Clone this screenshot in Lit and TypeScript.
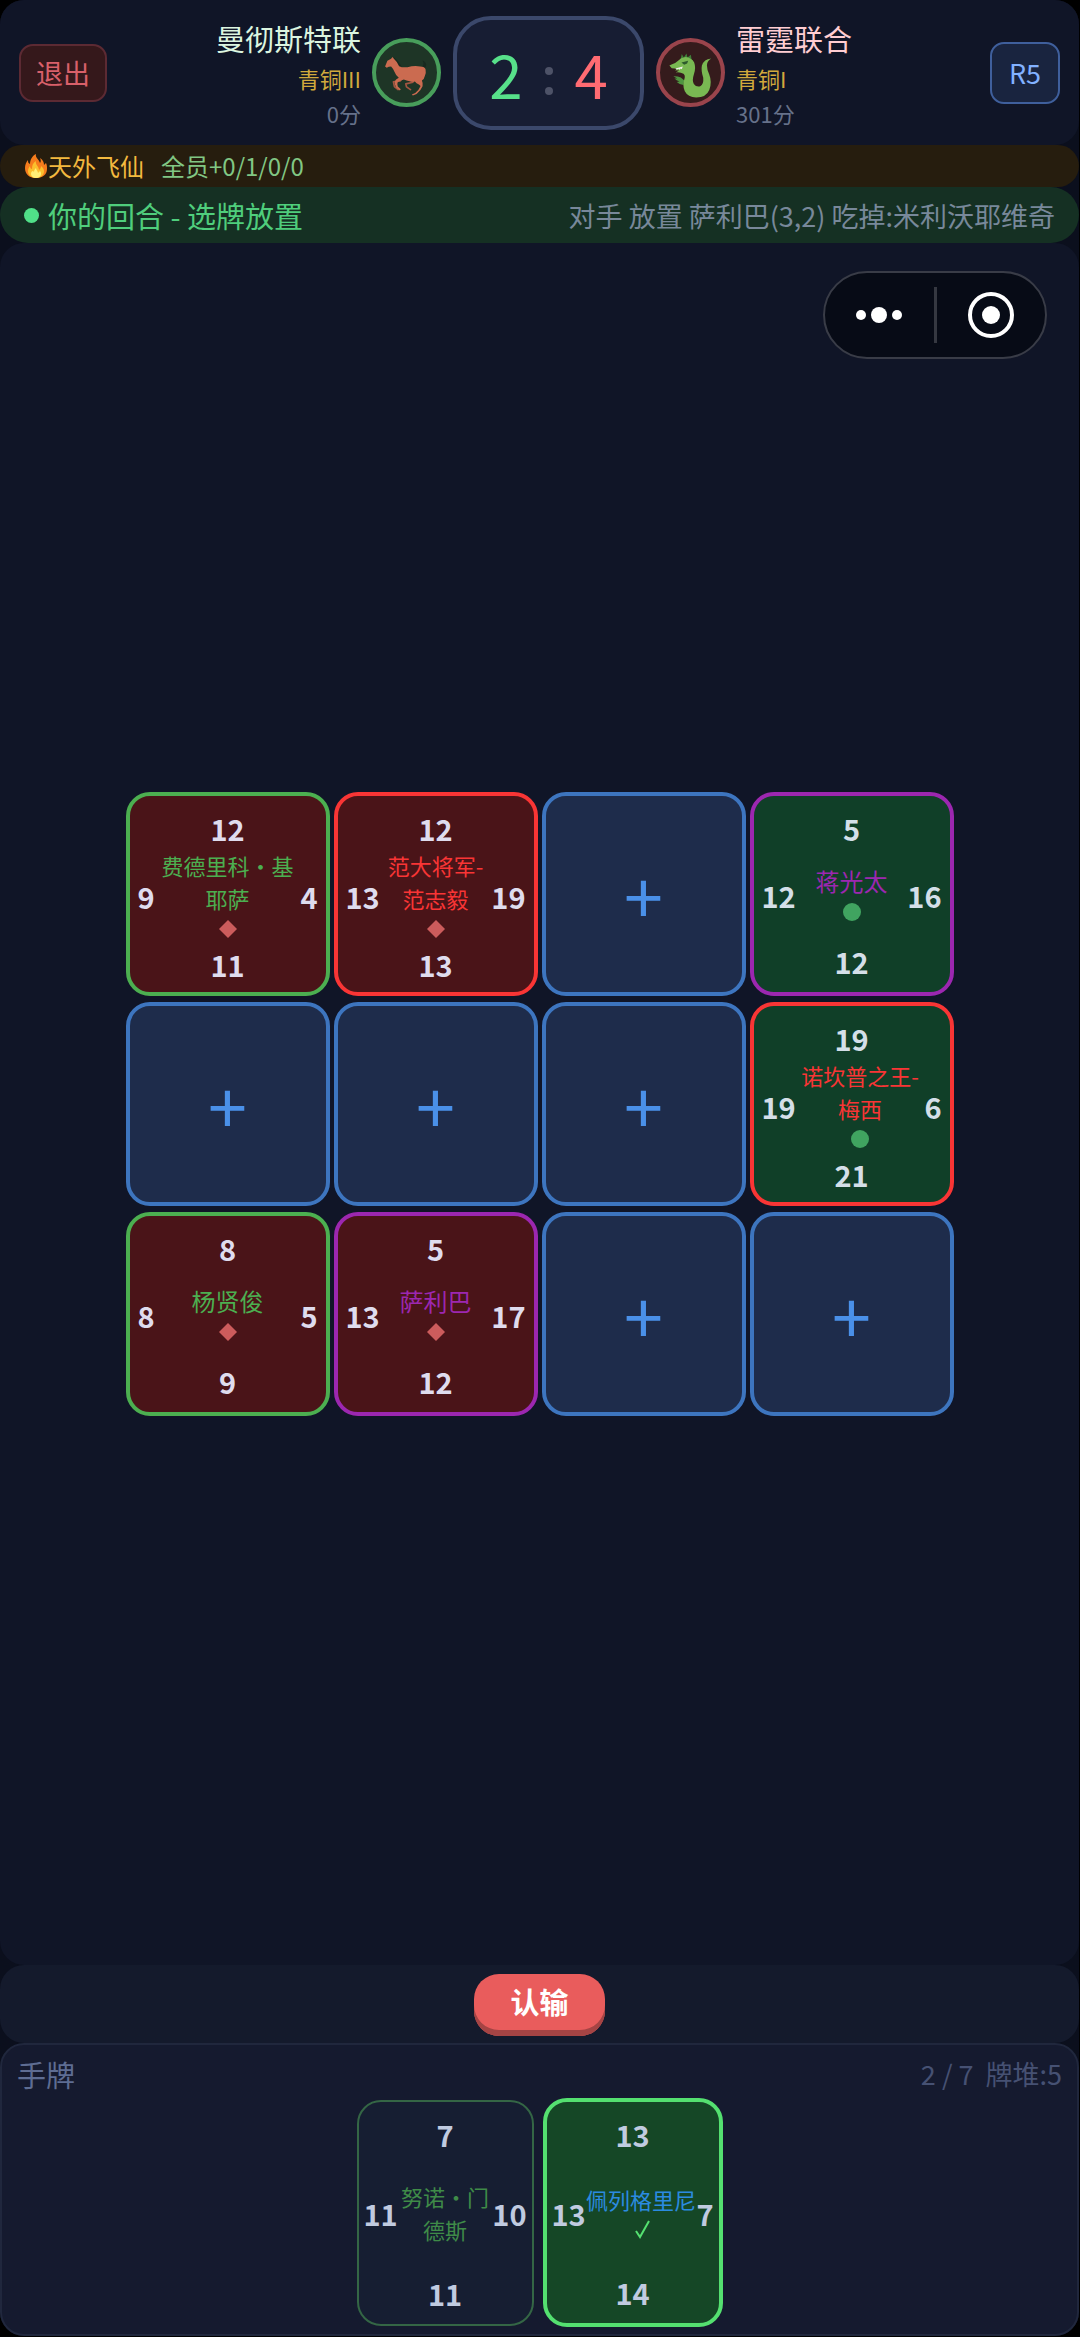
import { LitElement, html, css, svg, nothing } from 'lit';
import { customElement, property } from 'lit/decorators.js';
import { classMap } from 'lit/directives/class-map.js';

type Rarity = 'green' | 'red' | 'purple' | 'blue';

interface Card {
  name: string;
  rarity: Rarity;
  // top, right, bottom, left
  stats: [number, number, number, number];
  owner?: 'mine' | 'enemy';
}

const BOARD: (Card | null)[] = [
  { name: '费德里科·基耶萨', rarity: 'green', stats: [12, 4, 11, 9], owner: 'enemy' },
  { name: '范大将军-范志毅', rarity: 'red', stats: [12, 19, 13, 13], owner: 'enemy' },
  null,
  { name: '蒋光太', rarity: 'purple', stats: [5, 16, 12, 12], owner: 'mine' },
  null,
  null,
  null,
  { name: '诺坎普之王-梅西', rarity: 'red', stats: [19, 6, 21, 19], owner: 'mine' },
  { name: '杨贤俊', rarity: 'green', stats: [8, 5, 9, 8], owner: 'enemy' },
  { name: '萨利巴', rarity: 'purple', stats: [5, 17, 12, 13], owner: 'enemy' },
  null,
  null,
];

const HAND: Card[] = [
  { name: '努诺·门德斯', rarity: 'green', stats: [7, 10, 11, 11] },
  { name: '佩列格里尼', rarity: 'blue', stats: [13, 7, 14, 13] },
];

const horse = svg`
  <svg class="beast" viewBox="20 18 206 206" aria-hidden="true">
    <path fill="#17291f" d="M164 104q6 1 9-5 2-7-2-14 10 4 11 13-1 9-7 13zM78 84l8-8q12 8 22 26l-6 2z"/>
    <g fill="none" stroke="#a35642" stroke-width="5" stroke-linecap="round" stroke-linejoin="round">
      <path d="M112 136l-8 10-20 3 3 14 11 9"/>
      <path d="M148 138l-6 12-21 5 2 9 12 8"/>
    </g>
    <path fill="#cb6b50" d="M59 103l7-17 11-6 4-5 5 6q9 8 15 21 10 5 25 3 20-5 38-2 14 0 16 9 2 9-2 19-2 10-9 14 4 9 2 17-5 13-18 23l-11 5-3-3 10-5q12-10 16-21l-5-4q-8-3-12-9-8 2-16-1-9-1-17-5-8 3-18 7-3 6 0 14l9 8-3 4-11-9q-6-10-4-18 2-6 12-11-9-7-13-18-3-9-10-16l-7 1-6 3z"/>
  </svg>
`;

const dragon = svg`
  <svg class="beast" viewBox="890 53 206 206" aria-hidden="true">
    <path fill="#3f7d38" d="M963 118l4-17 6 10 8-12 3 12 10-8 2 13 6 8z"/>
    <path fill="#4f9440" d="M942 167q11-1 22 4l10 8-2 14q-12-1-20-9l8-1q-9-3-15-9h8z"/>
    <path fill="#79b852" d="M930 135l8-4q10-2 17-9 9-10 23-12 18 2 26 16 6 16-1 36-6 18 0 28 7 10 19 7 11-5 9-25-7-22-4-37 6-19 28-21-12 6-13 20 0 12 7 28 9 23 0 46-9 22-39 23-25-1-34-19-8-17-1-37 3-10-3-15-10-6-23-4l10-6-13-1 9-4-18-2z"/>
    <path fill="#2d5a2c" d="M966 126l20-5-3 8-9 4z"/>
    <path fill="#f2f2ec" d="M948 144l22-6-3 8-3-2-4 4-3-3-5 3z"/>
  </svg>
`;

const sharedStyles = css`
  :host {
    box-sizing: border-box;
    font-family: 'Noto Sans CJK SC', 'Noto Sans', sans-serif;
  }

  *,
  *::before {
    box-sizing: border-box;
  }

  button {
    margin: 0;
    padding: 0;
    border: 0;
    background: none;
    font: inherit;
    cursor: pointer;
  }
`;


@customElement('player-card')
export class PlayerCard extends LitElement {
  static override styles = [sharedStyles, css`
    :host {
      display: block;
    }

    .card {
      display: flex;
      flex-direction: column;
      width: 100%;
      height: 100%;
      padding: 11px 8px 10px;
      border: 4px solid currentColor;
      border-radius: 24px;
      font-size: 22px;
      line-height: 33px;
    }

    .green { color: #4caf50; }
    .red { color: #f93535; }
    .purple { color: #9c27b0; }
    .blue { color: #2b8be0; }

    .enemy { background: #4a1418; }
    .mine { background: #103f28; }

    .hand {
      padding: 11px 5px 10px;
      border: 2px solid #346645;
      background: #161e32;
    }

    .hand.green { color: #3f8b48; }

    .hand.selected {
      border: 4px solid #54e070;
      background: #154726;
    }

    .stat {
      flex: none;
      color: #dfdcee;
      font-size: 29px;
      font-weight: 700;
      line-height: 42px;
      text-align: center;
    }

    .mine .stat { color: #d4dfe8; }
    .hand .stat { color: #c0cbe0; }

    .middle {
      display: flex;
      flex: 1;
      align-items: center;
    }

    .center {
      display: flex;
      flex: 1;
      flex-direction: column;
      align-items: center;
      text-align: center;
    }

    .short {
      font-size: 24px;
      line-height: 35px;
    }

    .marker {
      display: flex;
      align-items: center;
      justify-content: center;
      height: 28px;
    }

    .marker svg {
      width: 20px;
      height: 20px;
    }
  `];

  @property({ attribute: false })
  card!: Card;
  @property({ type: Boolean })
  hand = false;
  @property({ type: Boolean })
  selected = false;


  override render() {
    const { name, rarity, stats, owner } = this.card;
    const [top, right, bottom, left] = stats;
    const classes = {
      card: true,
      [rarity]: true,
      mine: owner === 'mine',
      enemy: owner === 'enemy',
      hand: this.hand,
      selected: this.selected,
    };
    const content = html`
      <span class="stat">${top}</span>
      <span class="middle">
        <span class="stat">${left}</span>
        <span class="center">
          <span class=${name.length < 4 ? 'short' : 'long'}>${name}</span>
          ${this._marker()}
        </span>
        <span class="stat">${right}</span>
      </span>
      <span class="stat">${bottom}</span>
    `;
    return this.hand
      ? html`<button class=${classMap(classes)} aria-pressed=${this.selected}>${content}</button>`
      : html`<div class=${classMap(classes)}>${content}</div>`;
  }

  _marker() {
    if (this.selected) {
      return html`<span class="marker"><svg viewBox="0 0 20 20" aria-hidden="true">
        <path d="M5 11l4 6L18 1" fill="none" stroke="#54e070" stroke-width="2"/>
      </svg></span>`;
    }
    if (this.card.owner === 'enemy') {
      return html`<span class="marker"><svg viewBox="0 0 20 20" aria-hidden="true">
        <path d="M10 1l9 9-9 9-9-9z" fill="#cc5c5c"/>
      </svg></span>`;
    }
    if (this.card.owner === 'mine') {
      return html`<span class="marker"><svg viewBox="0 0 20 20" aria-hidden="true">
        <circle cx="10" cy="10" r="9" fill="#40a460"/>
      </svg></span>`;
    }
    return nothing;
  }
}


@customElement('app-root')
export class AppRoot extends LitElement {
  static override styles = [sharedStyles, css`
    :host {
      display: flex;
      min-height: 100vh;
      padding: 0 1px 1px 0;
      background: #000;
    }

    .page {
      position: relative;
      display: flex;
      flex: 1;
      flex-direction: column;
      border-radius: 24px;
      background: #0b0f1d;
    }

    .header {
      display: flex;
      align-items: center;
      min-height: 145px;
      padding: 15px 19px;
      border-radius: 24px;
      background: #101527;
    }

    .exit,
    .round {
      display: flex;
      align-items: center;
      justify-content: center;
      height: 58px;
      border: 2px solid #5c2a33;
      border-radius: 14px;
      font-size: 27px;
      line-height: 40px;
    }

    .exit {
      width: 88px;
      background: #35181b;
      color: #d9606a;
    }

    .round {
      width: 70px;
      height: 62px;
      border-color: #3f5f9c;
      background: #19243f;
      color: #82b1ff;
    }

    .versus {
      display: flex;
      flex: 1;
      align-items: center;
      justify-content: center;
      gap: 12px;
    }

    .team {
      display: flex;
      flex: 1;
      align-items: center;
      gap: 11px;
    }

    .home {
      justify-content: flex-end;
      text-align: right;
    }

    .info {
      display: flex;
      flex-direction: column;
      gap: 1px;
      padding-top: 2px;
    }

    .name {
      color: #dcf5e0;
      font-size: 29px;
      line-height: 43px;
    }

    .away .name { color: #ffcdd2; }

    .tier,
    .points {
      font-size: 22px;
      line-height: 34px;
    }

    .tier { color: #d1a93c; }
    .points { color: #66718a; }

    .avatar {
      display: flex;
      width: 69px;
      height: 69px;
      border: 4px solid #489e5b;
      border-radius: 50%;
      background: #1e3526;
    }

    .away .avatar {
      border-color: #9a444c;
      background: #351b1c;
    }

    .beast {
      width: 69px;
      height: 69px;
      margin: -4px;
    }

    .score {
      display: flex;
      align-items: center;
      justify-content: center;
      gap: 20px;
      width: 191px;
      height: 114px;
      border: 4px solid #3b486b;
      border-radius: 38px;
      background: #171d33;
      font-size: 60px;
      line-height: 86px;
    }

    .score-home { color: #57e08a; }
    .score-away { color: #ff6b72; }

    .colon {
      display: grid;
      gap: 12px;
      padding: 16px 2px 0;
    }

    .colon i {
      width: 8px;
      height: 8px;
      border-radius: 50%;
      background: #4d5267;
    }

    .buff {
      display: flex;
      align-items: center;
      min-height: 42px;
      padding: 3px 24px;
      border-radius: 24px;
      background: #261d0e;
      color: #f3b93f;
      font-size: 24px;
      line-height: 36px;
    }

    .flame {
      width: 24px;
      height: 24px;
    }

    .effect {
      margin-left: 17px;
      color: #81c784;
    }

    .turn {
      display: flex;
      align-items: center;
      justify-content: space-between;
      min-height: 56px;
      padding: 6px 24px;
      border-radius: 28px;
      background: #153023;
      color: #4fce7c;
      font-size: 29px;
      line-height: 43px;
    }

    .whose {
      display: flex;
      align-items: center;
      gap: 9px;
    }

    .whose::before {
      width: 15px;
      height: 15px;
      border-radius: 50%;
      background: #50e088;
      content: '';
    }

    .log {
      color: #78889a;
      font-size: 27px;
    }

    .field {
      display: flex;
      flex: 1;
      align-items: center;
      justify-content: center;
      border-radius: 24px;
      background: #101527;
    }

    .board {
      display: grid;
      grid-template-columns: repeat(4, 204px);
      grid-auto-rows: 204px;
      gap: 6px 4px;
    }

    .empty {
      border: 4px solid #3d75bf;
      border-radius: 24px;
      background: #1e2c4b;
      color: #4a90e8;
      font-size: 70px;
      line-height: 100px;
    }

    /* floats over the page in the corner, like the host app's own menu */
    .capsule {
      position: absolute;
      top: 271px;
      right: 32px;
      display: flex;
      align-items: center;
      width: 224px;
      height: 88px;
      border: 2px solid #393c47;
      border-radius: 44px;
      background: #070b16;
    }

    .capsule button {
      display: flex;
      flex: 1;
      align-items: center;
      justify-content: center;
    }

    .capsule button + button {
      border-left: 3px solid #353841;
    }

    .capsule svg {
      height: 56px;
    }

    .actions {
      display: flex;
      justify-content: center;
      padding: 9px 0 7px;
      border-radius: 24px;
      background: #141a2c;
    }

    .resign {
      width: 131px;
      padding: 6px 0 13px;
      border-radius: 25px;
      background: #e95c5c;
      box-shadow: inset 0 -6px #a54444;
      color: #fff;
      font-size: 29px;
      font-weight: 700;
      line-height: 43px;
    }

    .hand {
      padding: 8px 15px 7px;
      border: 2px solid #20273d;
      border-radius: 24px;
      background: #151a2f;
    }

    .hand-head {
      display: flex;
      align-items: center;
      justify-content: space-between;
      color: #5e6d93;
      font-size: 29px;
      line-height: 42px;
    }

    .count {
      display: flex;
      gap: 12px;
      color: #465173;
      font-size: 27px;
    }

    .cards {
      display: flex;
      align-items: center;
      justify-content: center;
      gap: 9px;
      padding-top: 3px;
    }

    .cards player-card {
      width: 177px;
      height: 226px;
    }

    .cards player-card[selected] {
      width: 180px;
      height: 229px;
    }
  `];

  @property({ type: Number })
  selectedIndex = 1;


  override render() {
    return html`
      <main class="page">
        <header class="header">
          <button class="exit">退出</button>
          <div class="versus">
            <div class="team home">
              <div class="info">
                <span class="name">曼彻斯特联</span>
                <span class="tier">青铜III</span>
                <span class="points">0分</span>
              </div>
              <div class="avatar">${horse}</div>
            </div>
            <div class="score">
              <span class="score-home">2</span>
              <span class="colon"><i></i><i></i></span>
              <span class="score-away">4</span>
            </div>
            <div class="team away">
              <div class="avatar">${dragon}</div>
              <div class="info">
                <span class="name">雷霆联合</span>
                <span class="tier">青铜I</span>
                <span class="points">301分</span>
              </div>
            </div>
          </div>
          <span class="round">R5</span>
        </header>

        <section class="buff">
          <svg class="flame" viewBox="0 0 24 24" aria-hidden="true">
            <path fill="#f57c1c" d="M12 24C5 24 1 20 1 14c0-3 1-6 3-8 0 2 0 3 2 4C6 6 8 2 12 0c-1 4 3 5 4 9 1-1 1-3 0-5 3 2 4 4 4 7l2-2c1 2 1 4 1 6 0 6-5 9-11 9z"/>
            <path fill="#fbc02d" d="M12 24c-5 0-8-3-8-7 0-2 1-4 2-5 0 2 1 3 2 3 0-4 1-6 4-8-1 4 3 5 3 9 1-1 2-2 2-4 2 2 3 3 3 5 0 4-3 7-8 7z"/>
            <path fill="#fff176" d="M12 24c-3 0-5-2-5-4s1-3 2-3l1 1c0-2 1-3 2-4 0 2 2 3 2 5l2-2c1 1 1 2 1 3 0 2-2 4-5 4z"/>
          </svg>
          <span>天外飞仙</span>
          <span class="effect">全员+0/1/0/0</span>
        </section>

        <section class="turn">
          <span class="whose">你的回合 - 选牌放置</span>
          <span class="log">对手 放置 萨利巴(3,2) 吃掉:米利沃耶维奇</span>
        </section>

        <section class="field">
          <div class="board">
            ${BOARD.map(card => card
              ? html`<player-card .card=${card}></player-card>`
              : html`<button class="empty" aria-label="放置">+</button>`)}
          </div>
        </section>

        <section class="actions">
          <button class="resign">认输</button>
        </section>

        <section class="hand">
          <div class="hand-head">
            <span>手牌</span>
            <span class="count"><span>2 / 7</span><span>牌堆:5</span></span>
          </div>
          <div class="cards">
            ${HAND.map((card, i) => html`
              <player-card
                hand
                .card=${card}
                ?selected=${i === this.selectedIndex}
                @click=${() => this._onCardClick(i)}></player-card>
            `)}
          </div>
        </section>

        <div class="capsule">
          <button aria-label="更多">
            <svg viewBox="0 0 56 56" fill="#fff">
              <circle cx="10" cy="28" r="5"/>
              <circle cx="28" cy="28" r="8"/>
              <circle cx="46" cy="28" r="5"/>
            </svg>
          </button>
          <button aria-label="关闭">
            <svg viewBox="0 0 56 56" fill="#fff">
              <circle cx="28" cy="28" r="21" fill="none" stroke="#fff" stroke-width="4"/>
              <circle cx="28" cy="28" r="9"/>
            </svg>
          </button>
        </div>
      </main>
    `;
  }

  _onCardClick(index: number) {
    this.selectedIndex = index;
  }
}
